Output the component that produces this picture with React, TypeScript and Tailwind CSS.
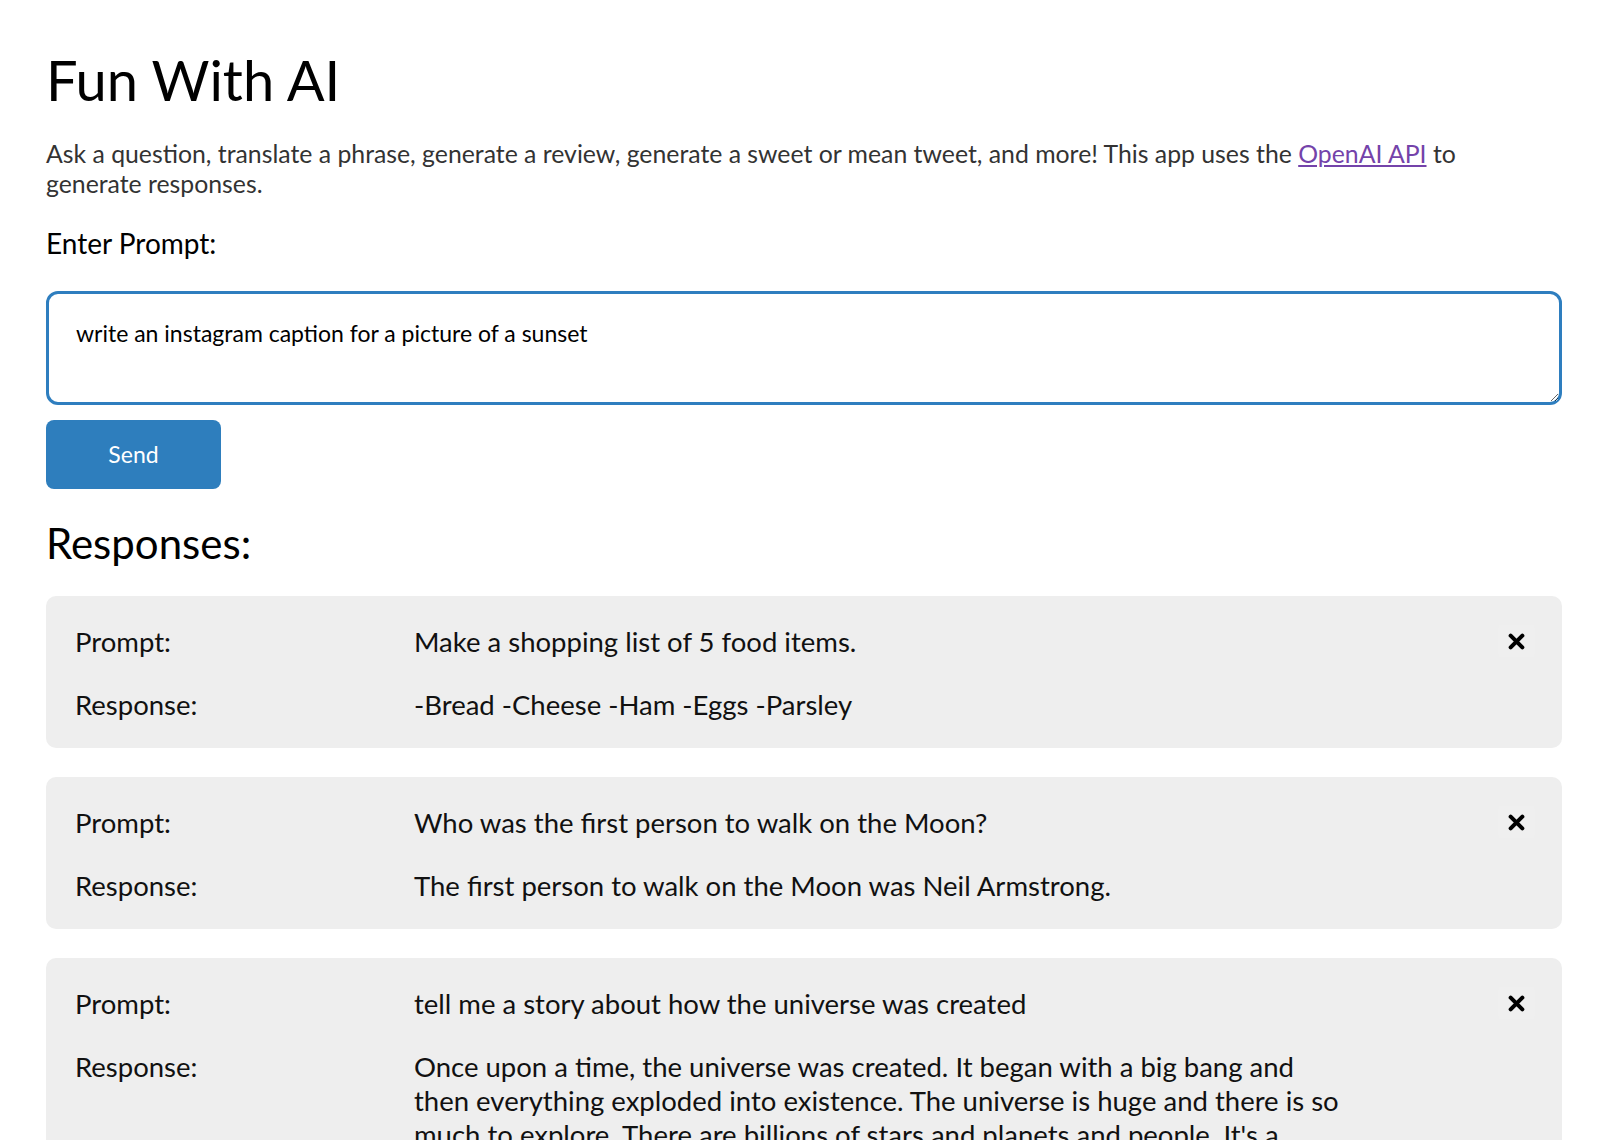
import { useState } from 'react'

type Entry = {
  id: number
  prompt: string
  response: string
}

const initialEntries: Entry[] = [
  {
    id: 1,
    prompt: 'Make a shopping list of 5 food items.',
    response: '-Bread -Cheese -Ham -Eggs -Parsley',
  },
  {
    id: 2,
    prompt: 'Who was the first person to walk on the Moon?',
    response: 'The first person to walk on the Moon was Neil Armstrong.',
  },
  {
    id: 3,
    prompt: 'tell me a story about how the universe was created',
    response:
      "Once upon a time, the universe was created. It began with a big bang and then everything exploded into existence. The universe is huge and there is so much to explore. There are billions of stars and planets and people. It's a big,\u00a0beautiful place full of wonder and mystery.",
  },
]

function CloseIcon() {
  return (
    <svg width="17" height="17" viewBox="0 0 16 16" aria-hidden="true">
      <path
        d="M2.5 2.5 L13.5 13.5 M13.5 2.5 L2.5 13.5"
        stroke="#000"
        strokeWidth="3.8"
        strokeLinecap="round"
        fill="none"
      />
    </svg>
  )
}

function ResponseCard({ entry, onRemove }: { entry: Entry; onRemove: () => void }) {
  return (
    <div className="grid grid-cols-[339px_936px_1fr] rounded-[10px] bg-[#eeeeee] pl-[29px] pt-[29px] pb-[26px] text-[27.5px] leading-[34px] text-[#111]">
      <div>Prompt:</div>
      <div>{entry.prompt}</div>
      <div className="flex justify-end pr-[27px]">
        <button
          type="button"
          onClick={onRemove}
          className="flex h-[32px] w-[37px] items-center justify-center rounded-[3px] bg-[#efefef]"
        >
          <CloseIcon />
        </button>
      </div>

      <div className="mt-[29px]">Response:</div>
      <div className="mt-[29px]">{entry.response}</div>
      <div />
    </div>
  )
}

export default function App() {
  const [entries, setEntries] = useState<Entry[]>(initialEntries)
  const [prompt, setPrompt] = useState('write an instagram caption for a picture of a sunset')

  return (
    <div className="min-h-screen bg-white pl-[46px] pr-[38px] pt-[46px] pb-10 font-['Lato',sans-serif] text-black">
      <h1 className="text-[56px] leading-[1.2]">Fun With AI</h1>

      <p className="mt-[26px] max-w-[1480px] text-[24.8px] leading-[30px] text-[#333]">
        Ask a question, translate a phrase, generate a review, generate a sweet or mean tweet, and
        more! This app uses the{' '}
        <a href="#" className="text-[#7443aa] underline">
          OpenAI API
        </a>{' '}
        to generate responses.
      </p>

      <label className="mt-[28px] block text-[28px] leading-[1.2]">Enter Prompt:</label>

      <textarea
        value={prompt}
        onChange={(e) => setPrompt(e.target.value)}
        className="mt-[30px] block h-[114px] w-full rounded-[12px] border-[3px] border-[#2e7ebf] px-[27px] pt-[26px] text-[23px] leading-[1.2] text-black outline-none"
      />

      <button
        type="button"
        className="mt-[15px] h-[69px] w-[175px] rounded-[8px] bg-[#2e7ebd] text-[23px] text-white"
      >
        Send
      </button>

      <h2 className="mt-[29px] text-[42px] leading-[1.2]">Responses:</h2>

      <div className="mt-[28px] flex flex-col gap-[29px]">
        {entries.map((entry) => (
          <ResponseCard
            key={entry.id}
            entry={entry}
            onRemove={() => setEntries((prev) => prev.filter((e) => e.id !== entry.id))}
          />
        ))}
      </div>
    </div>
  )
}
